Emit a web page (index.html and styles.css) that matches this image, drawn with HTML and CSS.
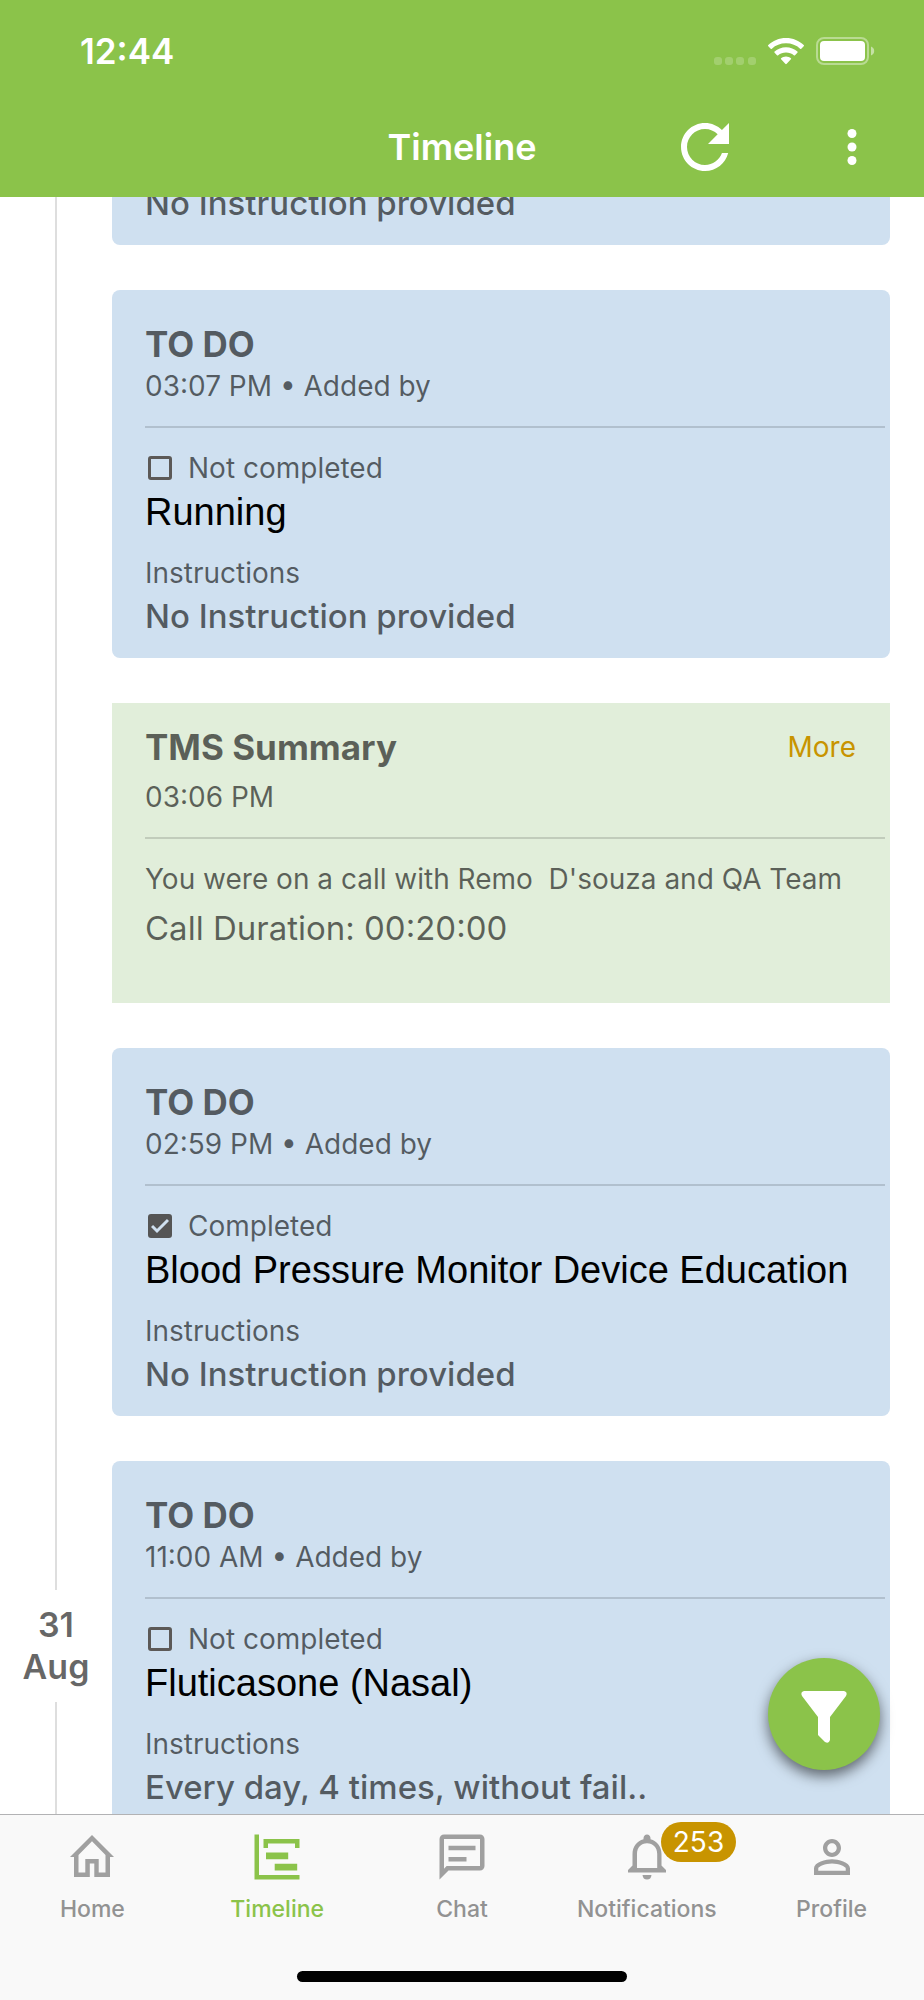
FILE: index.html
```html
<!DOCTYPE html>
<html lang="en">
<head>
    <meta charset="UTF-8">
    <meta name="viewport" content="width=device-width, initial-scale=1.0">
    <title>Timeline</title>
    <link rel="stylesheet" href="styles.css">
</head>
<body>

    <!-- Header -->
    <header class="header">
        <div class="status-bar">
            <span class="clock">12:44</span>
            <div class="status-icons">
                <svg width="42" height="8" viewBox="0 0 42 8" fill="#fff" fill-opacity="0.2">
                    <rect x="0" y="0" width="8" height="8" rx="3"/>
                    <rect x="11" y="0" width="8" height="8" rx="3"/>
                    <rect x="22" y="0" width="8" height="8" rx="3"/>
                    <rect x="34" y="0" width="8" height="8" rx="3"/>
                </svg>
                <svg class="wifi" width="36" height="27" viewBox="0 0 36 27" fill="#fff">
                    <path d="M18 0C11 0 4.700 2.700 0.300 7.100Q-0.300 7.700 0.300 8.300L2.700 10.700Q3.300 11.300 3.900 10.700C7.500 7.200 12.500 5.300 18 5.300S28.500 7.200 32.100 10.700Q32.700 11.300 33.300 10.700L35.700 8.300Q36.300 7.700 35.700 7.100C31.300 2.700 25 0 18 0Z"/>
                    <path d="M18 9.200C13.600 9.200 9.600 10.900 6.600 13.600Q6 14.200 6.600 14.800L9 17.200Q9.600 17.800 10.200 17.300C12.300 15.500 15 14.500 18 14.500S23.700 15.500 25.800 17.300Q26.400 17.800 27 17.200L29.400 14.800Q30 14.200 29.400 13.600C26.400 10.900 22.400 9.200 18 9.200Z"/>
                    <path d="M18 18.400C16.100 18.400 14.400 19.100 13.100 20.200Q12.500 20.700 13.100 21.300L17.300 25.800Q18 26.500 18.700 25.800L22.900 21.300Q23.500 20.700 22.900 20.200C21.600 19.100 19.900 18.400 18 18.400Z"/>
                </svg>
                <svg width="60" height="28" viewBox="0 0 60 28">
                    <rect x="1" y="1" width="51" height="26" rx="7" fill="none" stroke="#fff" stroke-opacity="0.4" stroke-width="2"/>
                    <rect x="4" y="4" width="45" height="20" rx="4" fill="#fff"/>
                    <path d="M55 9.500c2 .8 3.200 2.500 3.200 4.500s-1.200 3.700-3.200 4.500z" fill="#fff" fill-opacity="0.5"/>
                </svg>
            </div>
        </div>
        <div class="nav-bar">
            <h1 class="page-title">Timeline</h1>
            <div class="nav-actions">
                <button class="icon-btn" aria-label="Refresh">
                    <svg width="72" height="72" viewBox="0 0 24 24" fill="#fff"><path d="M17.650 6.350C16.200 4.900 14.210 4 12 4c-4.420 0-7.990 3.580-7.990 8s3.570 8 7.990 8c3.730 0 6.840-2.550 7.730-6h-2.080c-.82 2.330-3.040 4-5.650 4-3.310 0-6-2.690-6-6s2.690-6 6-6c1.660 0 3.140.69 4.220 1.780L13 11h7V4l-2.350 2.350z"/></svg>
                </button>
                <button class="icon-btn" aria-label="More options">
                    <svg width="54" height="54" viewBox="0 0 24 24" fill="#fff"><circle cx="12" cy="6" r="2"/><circle cx="12" cy="12" r="2"/><circle cx="12" cy="18" r="2"/></svg>
                </button>
            </div>
        </div>
    </header>

    <!-- Timeline -->
    <main class="content">
        <div class="timeline">
            <div class="item">
                <div class="rail"></div>
                <article class="card card-scrolled">
                    <p class="note">No Instruction provided</p>
                </article>
            </div>

            <div class="item">
                <div class="rail"></div>
                <article class="card">
                    <h2 class="card-title">TO DO</h2>
                    <p class="meta">03:07 PM • Added by</p>
                    <hr class="divider">
                    <label class="status"><input type="checkbox" class="check">Not completed</label>
                    <h3 class="task">Running</h3>
                    <p class="meta">Instructions</p>
                    <p class="note">No Instruction provided</p>
                </article>
            </div>

            <div class="item">
                <div class="rail"></div>
                <article class="card card-summary">
                    <div class="card-head">
                        <h2 class="card-title">TMS Summary</h2>
                        <a href="#more" class="more">More</a>
                    </div>
                    <p class="meta">03:06 PM</p>
                    <hr class="divider">
                    <p class="meta call">You were on a call with Remo&nbsp; D'souza and QA Team</p>
                    <p class="duration">Call Duration: 00:20:00</p>
                </article>
            </div>

            <div class="item">
                <div class="rail"></div>
                <article class="card">
                    <h2 class="card-title">TO DO</h2>
                    <p class="meta">02:59 PM • Added by</p>
                    <hr class="divider">
                    <label class="status"><input type="checkbox" class="check" checked>Completed</label>
                    <h3 class="task">Blood Pressure Monitor Device Education</h3>
                    <p class="meta">Instructions</p>
                    <p class="note">No Instruction provided</p>
                </article>
            </div>

            <div class="item">
                <div class="rail">
                    <div class="date">31<br>Aug</div>
                </div>
                <article class="card">
                    <h2 class="card-title">TO DO</h2>
                    <p class="meta">11:00 AM • Added by</p>
                    <hr class="divider">
                    <label class="status"><input type="checkbox" class="check">Not completed</label>
                    <h3 class="task">Fluticasone (Nasal)</h3>
                    <p class="meta">Instructions</p>
                    <p class="note">Every day, 4 times, without fail..</p>
                </article>
            </div>
        </div>

        <button class="filter-btn" aria-label="Filter">
            <svg width="48" height="54" viewBox="0 0 48 54" fill="#fff"><path d="M4 1H44Q48 2 46 6L30 27V50Q29 54 25 52L18 45V27L2 6Q0 2 4 1Z"/></svg>
        </button>
    </main>

    <!-- Bottom tabs -->
    <footer class="footer">
        <nav class="tabs">
            <a href="#home" class="tab">
                <svg width="54" height="54" viewBox="0 0 54 54" fill="#a0a0a0" fill-rule="evenodd"><path d="M27 5L49 27H45V47H29.300V33.500H24.800V47H9V27H5ZM27 11.300L13.500 25V42.500H20.300V29H33.700V42.500H40.500V25Z"/></svg>
                <span>Home</span>
            </a>
            <a href="#timeline" class="tab active">
                <svg width="54" height="54" viewBox="0 0 54 54" fill="#8bc34a"><path d="M4.500 4.500H9V45H49.500V49.500H4.500z"/><path d="M13.500 9H49.500V18H45V13.500H18V18H13.500z"/><path d="M16 22.500H38.200V29.200H16zM24.700 33.700H47.200V40.500H24.700z"/></svg>
                <span>Timeline</span>
            </a>
            <a href="#chat" class="tab">
                <svg width="54" height="54" viewBox="0 0 24 24" fill="#a0a0a0"><path d="M4 4h16v12H5.170L4 17.170V4m0-2c-1.100 0-1.990.9-1.990 2L2 22l4-4h14c1.100 0 2-.9 2-2V4c0-1.100-.9-2-2-2H4zm2 10h8v2H6v-2zm0-5h12v2H6V7z"/></svg>
                <span>Chat</span>
            </a>
            <a href="#notifications" class="tab">
                <svg width="54" height="54" viewBox="0 0 54 54" fill="#a0a0a0"><path d="M23.500 9.300V8Q24 4.500 27 4.500T30.500 8V9.300C37 11 41.500 16.500 41.500 24V35.500L46 40V42.500H8V40L12.500 35.500V24C12.500 16.500 17 11 23.500 9.300ZM17 38H37.200V24C37.200 17.500 33 13.300 27 13.300S17 17.500 17 24Z" fill-rule="evenodd"/><path d="M22.500 45H31.500Q31 49.500 27 49.500T22.500 45Z"/></svg>
                <span>Notifications</span>
                <span class="badge">253</span>
            </a>
            <a href="#profile" class="tab">
                <svg width="54" height="54" viewBox="0 0 24 24" fill="#a0a0a0"><path d="M12 5.900c1.160 0 2.100.94 2.100 2.100s-.94 2.100-2.100 2.100S9.900 9.160 9.900 8s.94-2.100 2.100-2.100m0 9c2.970 0 6.100 1.460 6.100 2.100v1.100H5.900V17c0-.64 3.130-2.100 6.100-2.100M12 4C9.790 4 8 5.790 8 8s1.790 4 4 4 4-1.790 4-4-1.790-4-4-4zm0 9c-2.670 0-8 1.340-8 4v3h16v-3c0-2.660-5.330-4-8-4z"/></svg>
                <span>Profile</span>
            </a>
        </nav>
        <div class="home-indicator"></div>
    </footer>

</body>
</html>
```

FILE: styles.css
```css
* {
    box-sizing: border-box;
}

body {
    margin: 0;
    height: 100vh;
    display: flex;
    flex-direction: column;
    font-family: Inter, "Liberation Sans", sans-serif;
    background-color: #fff;
    color: rgba(0, 0, 0, 0.6);
}

h1, h2, h3, p {
    margin: 0;
}

button {
    border: none;
    padding: 0;
    background: none;
    cursor: pointer;
}

svg {
    display: block;
}

/* Header */
.header {
    flex: none;
    background-color: #8bc34a;
    color: #fff;
    padding-bottom: 5px;
}

.status-bar {
    display: flex;
    justify-content: space-between;
    align-items: center;
    height: 102px;
    padding: 0 48px 0 80px;
}

.clock {
    font-size: 35px;
    font-weight: 600;
}

.status-icons {
    display: flex;
    align-items: flex-end;
    gap: 12px;
}

.nav-bar {
    display: grid;
    grid-template-columns: 1fr auto 1fr;
    align-items: center;
    height: 90px;
    padding: 0 45px;
}

.page-title {
    grid-column: 2;
    font-size: 36px;
    line-height: 44px;
    font-weight: 600;
}

.nav-actions {
    display: flex;
    justify-content: flex-end;
    align-items: center;
    gap: 84px;
}

/* Timeline */
.content {
    position: relative;
    flex: 1;
    min-height: 0;
    overflow: hidden;
}

.timeline {
    margin-top: -39px;
}

.item {
    display: flex;
}

/* Line on the left, broken by the date */
.rail {
    flex: none;
    width: 112px;
    display: flex;
    flex-direction: column;
    align-items: center;
}

.rail::before,
.rail::after {
    content: "";
    flex: 1;
    width: 2px;
    background-color: #dedede;
}

.date {
    padding: 14px 0;
    font-size: 34px;
    line-height: 42px;
    font-weight: 600;
    text-align: center;
}

.card {
    flex: 1;
    min-width: 0;
    margin: 22px 34px 23px 0;
    padding: 32px 5px 19px 33px;
    border-radius: 8px;
    background-color: #cfe0f0;
}

.card-scrolled {
    padding-top: 0;
}

.card-title {
    font-size: 35px;
    line-height: 44px;
    font-weight: 700;
}

.meta,
.status,
.more {
    font-size: 28px;
    line-height: 40px;
}

.divider {
    height: 2px;
    margin: 20px 0;
    border: none;
    background-color: rgba(0, 0, 0, 0.14);
}

.status {
    display: flex;
    align-items: center;
    gap: 16px;
    padding-left: 3px;
}

.check {
    appearance: none;
    width: 24px;
    height: 24px;
    margin: 0;
    border: 3px solid #5c5957;
    border-radius: 3px;
}

.check:checked {
    background: #555 url("data:image/svg+xml,%3Csvg xmlns='http://www.w3.org/2000/svg' viewBox='0 0 18 18'%3E%3Cpath d='M1 9l5 5L17 3' fill='none' stroke='%23cfe0f0' stroke-width='3'/%3E%3C/svg%3E") no-repeat center;
    border-color: #555;
}

.task {
    margin-bottom: 17px;
    font-family: "Liberation Sans", Arial, sans-serif;
    font-size: 38px;
    line-height: 48px;
    font-weight: 400;
    color: #000;
}

.note {
    font-size: 33px;
    line-height: 46px;
    font-weight: 500;
}

/* Call summary card */
.card-summary {
    padding-top: 22px;
    padding-bottom: 53px;
    border-radius: 0;
    background-color: #e1eeda;
}

.card-head {
    display: flex;
    justify-content: space-between;
    align-items: center;
    margin-bottom: 8px;
    padding-right: 29px;
}

.more {
    color: #c89400;
    text-decoration: none;
}

.call {
    margin-bottom: 7px;
}

.duration {
    font-size: 33px;
    line-height: 44px;
}

/* Filter button */
.filter-btn {
    position: absolute;
    right: 44px;
    bottom: 44px;
    width: 112px;
    height: 112px;
    padding-top: 6px;
    display: flex;
    justify-content: center;
    align-items: center;
    border-radius: 50%;
    background-color: #8bc34a;
    box-shadow: 0 6px 14px rgba(0, 0, 0, 0.55);
}

/* Bottom tabs */
.footer {
    flex: none;
    border-top: 1px solid #b2b2b4;
    background-color: #f9f9f9;
    padding-bottom: 18px;
}

.tabs {
    display: grid;
    grid-template-columns: repeat(5, 1fr);
    padding-top: 15px;
}

.tab {
    position: relative;
    display: flex;
    flex-direction: column;
    align-items: center;
    gap: 10px;
    font-size: 23px;
    line-height: 30px;
    font-weight: 500;
    color: #929292;
    text-decoration: none;
}

.tab.active {
    color: #8bc34a;
}

.badge {
    position: absolute;
    top: -8px;
    left: calc(50% + 14px);
    padding: 0 12px;
    border-radius: 20px;
    background-color: #c89400;
    color: #fff;
    font-size: 28px;
    line-height: 40px;
    font-weight: 400;
}

.home-indicator {
    width: 330px;
    height: 11px;
    margin: 47px auto 0;
    border-radius: 6px;
    background-color: #000;
}
```
